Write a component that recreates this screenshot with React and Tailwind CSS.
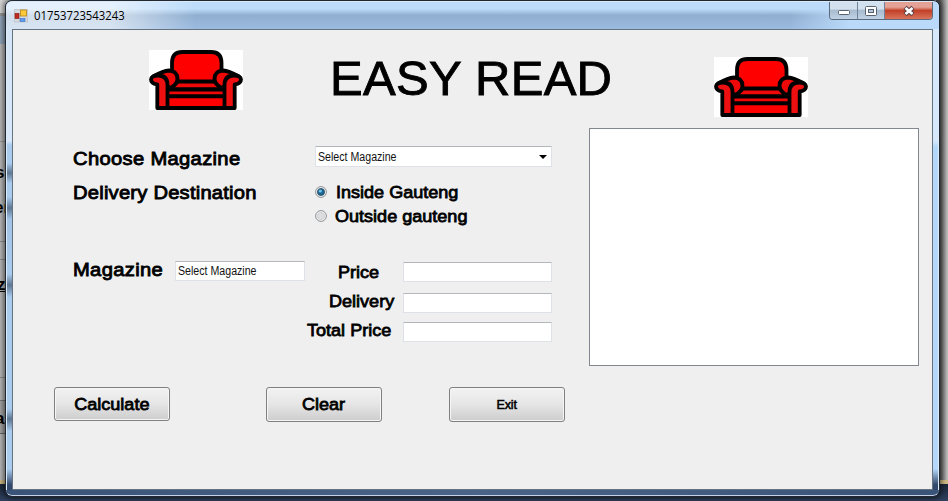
const sans = "font-['Liberation_Sans',Arial,sans-serif]";

function Chair() {
  return (
    <svg width="94" height="60" viewBox="0 0 94 60" className="block shrink-0 bg-white">
      <g fill="#fe0000" stroke="#000" strokeWidth="3.8" strokeLinejoin="round">
        <path d="M23 34V13Q23 2 33.500 2H62Q72.500 2 72.500 13V34Z" />
        <path d="M20 39.500L29 31.500H66L75 39.500Z" fill="#ee0808" />
        <path d="M18 39.500H76V46.300H18Z" fill="#ee0808" />
        <path d="M18 46.300H76V58H18Z" />
        <path d="M5 26Q14 21 20 20.500Q28.500 21 28.500 29Q28 35 21 38L14 33Z" fill="#ee0808" />
        <path d="M89 26Q80 21 74 20.500Q65.500 21 65.500 29Q66 35 73 38L80 33Z" fill="#ee0808" />
        <path d="M8.300 58V34.500Q2 33.500 2 29.500Q2.500 25.500 9 25.500Q18.500 25.500 18.500 35V58Z" fill="#ee1010" />
        <path d="M85.700 58V34.500Q92 33.500 92 29.500Q91.500 25.500 85 25.500Q75.500 25.500 75.500 35V58Z" fill="#ee1010" />
      </g>
    </svg>
  );
}

function AppIcon() {
  return (
    <svg width="14" height="14" viewBox="0 0 14 14" className="block shrink-0">
      <rect x="0.500" y="0.500" width="13" height="12.500" fill="#d5d9df" stroke="#c3c8d0" />
      <rect x="1" y="4.500" width="4" height="5" fill="#c02b20" stroke="#8f2019" strokeWidth=".7" />
      <rect x="6.500" y="1" width="6" height="6" fill="#fbc93a" stroke="#b88714" strokeWidth=".8" />
      <rect x="6" y="9.500" width="5" height="3" fill="#5b9bf0" stroke="#3c70c4" strokeWidth=".6" />
    </svg>
  );
}

function Field({ className, children }) {
  return (
    <div className={`flex items-center justify-between border border-[#dfe1e9] border-t-[#b4b6bf] bg-white px-[2px] ${className}`}>
      {children}
    </div>
  );
}

function SmallText({ children }) {
  return <span className="inline-block origin-left scale-x-[0.885] text-[12px] leading-[14px] whitespace-nowrap text-[#111]">{children}</span>;
}

function Heading({ children, className = "" }) {
  return (
    <div className={`origin-left scale-x-[1.09] text-[18.5px] leading-[24px] tracking-[0.3px] whitespace-nowrap [-webkit-text-stroke:0.85px_#000] ${className}`}>{children}</div>
  );
}

function Label({ children, className = "" }) {
  return (
    <div className={`origin-left scale-x-[1.05] text-[17.2px] leading-[20px] whitespace-nowrap [-webkit-text-stroke:0.8px_#000] ${className}`}>{children}</div>
  );
}

function Radio({ checked, children, className = "" }) {
  return (
    <div className={`flex h-6 items-center ${className}`}>
      <svg width="12" height="12" viewBox="0 0 12 12" className="block shrink-0">
        <circle cx="6" cy="6" r="5.400" fill="#f4f4f4" stroke="#8c8f94" strokeWidth="1" />
        <circle cx="6" cy="6" r="3.600" fill={checked ? "#1b6390" : "#dcdddf"} stroke={checked ? "#2a4658" : "#c3c5c8"} strokeWidth=".7" />
        {checked && <circle cx="5.300" cy="5" r="1.600" fill="#6fc6ea" />}
      </svg>
      {children}
    </div>
  );
}

function Button({ className, children }) {
  return (
    <button className={`flex w-[116px] items-center justify-center rounded-[3px] border border-[#808080] bg-linear-to-b from-[#f2f2f2] from-0% via-[#e6e6e6] via-48% to-[#cdcdcd] shadow-[inset_0_0_0_1px_#f5f5f5] ${className}`}>
      {children}
    </button>
  );
}

function CaptionButtons() {
  return (
    <div className="mr-[6px] flex h-[18px] w-[104px] shrink-0 overflow-hidden rounded-b-[4px] border border-t-0 border-[#5c6b7c]">
      <div className="flex w-[28px] items-center justify-center border-r border-[#70819a] bg-linear-to-b from-[#d3e0ed] from-40% via-[#a9bccf] via-50% to-[#bfd2e6]">
        <svg width="14" height="14" viewBox="0 0 14 14"><rect x="1.500" y="6.500" width="11" height="4" rx="1" fill="#fff" stroke="#59636f" /></svg>
      </div>
      <div className="flex w-[27px] items-center justify-center border-r border-[#70819a] bg-linear-to-b from-[#d3e0ed] from-40% via-[#a9bccf] via-50% to-[#bfd2e6]">
        <svg width="14" height="14" viewBox="0 0 14 14"><rect x="1.500" y="2.500" width="11" height="9" rx="1" fill="#fff" stroke="#59636f" /><rect x="4.500" y="5.500" width="5" height="3" fill="#b5c7d9" stroke="#59636f" /></svg>
      </div>
      <div className="flex flex-1 items-center justify-center bg-linear-to-b from-[#e3a295] from-30% via-[#c23f28] via-50% to-[#d8735a]">
        <svg width="14" height="14" viewBox="0 0 14 14"><path d="M3 3.500L11 10.500M11 3.500L3 10.500" stroke="#5c4245" strokeWidth="4.800" /><path d="M3.500 4L10.500 10M10.500 4L3.500 10" stroke="#fff" strokeWidth="2.700" /></svg>
      </div>
    </div>
  );
}

function Desktop() {
  return (
    <div className="absolute inset-0 flex flex-col">
      <div className="flex h-[480px] justify-between">
        <div className="flex w-3 flex-col bg-[#b9b9b9]">
          <div className="h-[13px] bg-[#d4d4d4]" />
          <div className="h-[3px] bg-[#969696]" />
          <div className="h-[28px] bg-[#91a5ba]" />
          <div className="h-[98px] border-b border-[#999]" />
          <div className="h-[100px] border-b border-[#8c8c8c]" />
          <div className="h-[18px] border-b border-[#8c8c8c]" />
          <div className="h-[118px] border-b border-[#8c8c8c]" />
          <div className="h-[23px] border-b border-[#777]" />
          <div className="h-[33px] border-b border-[#666] bg-[#a5a5a5]" />
        </div>
        <div className="w-3 bg-linear-to-r from-[#555] from-30% to-[#c4c4c4]" />
      </div>
      <div className="h-1 bg-[#cdbb83]" />
      <div className="h-[17px] bg-linear-to-b from-[#1b2638] to-[#30415f]" />
      <span className="absolute top-[163px] -left-[5px] text-[17px] leading-5 font-bold">s</span>
      <span className="absolute top-[198px] -left-[6px] text-[17px] leading-5 font-bold">er</span>
      <span className="absolute top-[275px] -left-[3px] text-[17px] leading-5 font-bold underline">z</span>
      <span className="absolute top-[409px] -left-[5px] text-[17px] leading-5 font-bold">a</span>
    </div>
  );
}

export default function App() {
  return (
    <div className={`relative h-[501px] w-[948px] overflow-hidden text-black ${sans}`}>
      <Desktop />
      <div className="absolute top-0 left-[5px] flex h-[497px] w-[935px] flex-col overflow-hidden rounded-[7px] border border-[#22282f] bg-[#455d80] shadow-[0_0_5px_2px_rgba(0,0,0,0.5)]">
        <div className="flex h-[28px] shrink-0 items-start justify-between border-t border-[#d9e9f8] bg-linear-to-b from-[#bddcfa] from-25% via-[#90afd0] via-50% to-[#9bbbe0]">
          <div className="flex h-full w-[190px] items-center bg-linear-to-r from-white/60 from-55% to-white/0 pl-[8px]">
            <AppIcon />
            <span className="ml-[6px] inline-block origin-left scale-x-[0.945] font-['Open_Sans',sans-serif] text-[12px] leading-[16px]">01753723543243</span>
          </div>
          <div className="flex h-full flex-1 justify-end bg-linear-to-r from-[#bbd9f8]/0 from-80% to-[#bbd9f8] to-88%">
            <CaptionButtons />
          </div>
        </div>
        <div className="flex min-h-0 flex-1">
          <div className="w-[6px] shrink-0 border-l border-[#dcebfa] bg-[linear-gradient(to_bottom,#d5e5f6_0px,#d9e8f8_112px,#a9cbee_116px,#a9cbee_134px,#5f7792_144px,#a9cbee_154px,#a9cbee_168px,#5f7792_179px,#a2c3e6_190px,#a9cbee_245px,#5f7792_256px,#a9cbee_268px,#a9cbee_380px,#5f7792_390px,#a9cbee_402px,#a9cbee_440px,#33486a_456px)]" />
          <div className="flex min-w-0 flex-1 flex-col border border-[#65727f] bg-[#efefef]">
            <div className="flex h-[98px] shrink-0">
              <div className="mt-[20px] ml-[136px]"><Chair /></div>
              <div className="mt-[19px] ml-[87px] w-[384px] text-[49px] leading-[58px] tracking-[0.3px] whitespace-nowrap [-webkit-text-stroke:0.9px_#000]">EASY READ</div>
              <div className="mt-[27px]"><Chair /></div>
            </div>
            <div className="flex">
              <div className="w-[576px]">
                <div className="flex pt-[18px] pl-[60px]">
                  <Heading className="mr-[20px] w-[222px] pt-px">Choose Magazine</Heading>
                  <Field className="h-[21px] w-[237px]">
                    <SmallText>Select Magazine</SmallText>
                    <svg width="8" height="4" viewBox="0 0 8 4" className="mr-[2px]"><path d="M0 0H8L4 4Z" /></svg>
                  </Field>
                </div>
                <div className="flex pt-[9px] pl-[60px]">
                  <Heading className="mr-[20px] w-[222px] pt-px tracking-[0.2px]!">Delivery Destination</Heading>
                  <div>
                    <Radio checked><Label className="ml-[9px]">Inside Gauteng</Label></Radio>
                    <Radio><Label className="ml-[8px]">Outside gauteng</Label></Radio>
                  </div>
                </div>
                <div className="flex pt-[32px] pl-[60px]">
                  <Heading className="-mt-[2px] mr-[6px] w-[96px]">Magazine</Heading>
                  <Field className="mt-px h-[20px] w-[130px]"><SmallText>Select Magazine</SmallText></Field>
                  <div className="flex flex-col gap-[10px] pt-[2px]">
                    <div className="flex h-[20px]"><Label className="mr-[18px] ml-[33px] w-[47px]">Price</Label><Field className="h-5 w-[149px]" /></div>
                    <div className="flex h-[20px]"><Label className="-mt-px mr-[4px] ml-[24px] w-[70px]">Delivery</Label><Field className="mt-px h-5 w-[149px]" /></div>
                    <div className="flex h-[20px]"><Label className="-mt-[2px] ml-[2px] w-[96px]">Total Price</Label><Field className="h-5 w-[149px]" /></div>
                  </div>
                </div>
                <div className="flex pt-[45px] pl-[41px]">
                  <Button className="h-[34px]"><Label className="origin-center!">Calculate</Label></Button>
                  <Button className="ml-[96px] h-[35px]"><Label className="-mt-px origin-center!">Clear</Label></Button>
                  <Button className="ml-[67px] h-[35px]"><Label className="origin-center! text-[12px]! tracking-[-0.2px] [-webkit-text-stroke:0.5px_#000]!">Exit</Label></Button>
                </div>
              </div>
              <div className="h-[238px] w-[330px] border border-[#828790] bg-white" />
            </div>
          </div>
          <div className="w-[6px] shrink-0 border-r border-[#dcebfa] bg-[linear-gradient(to_bottom,#d5e7f9_0px,#d5e7f9_112px,#b4d8fa_118px,#b4d8fa_440px,#33486a_456px)]" />
        </div>
        <div className="h-[6px] shrink-0 rounded-b-[6px] border-b border-[#c3d2e4] bg-linear-to-r from-[#3a5479] via-[#4a6489] to-[#3a5479]" />
      </div>
    </div>
  );
}
